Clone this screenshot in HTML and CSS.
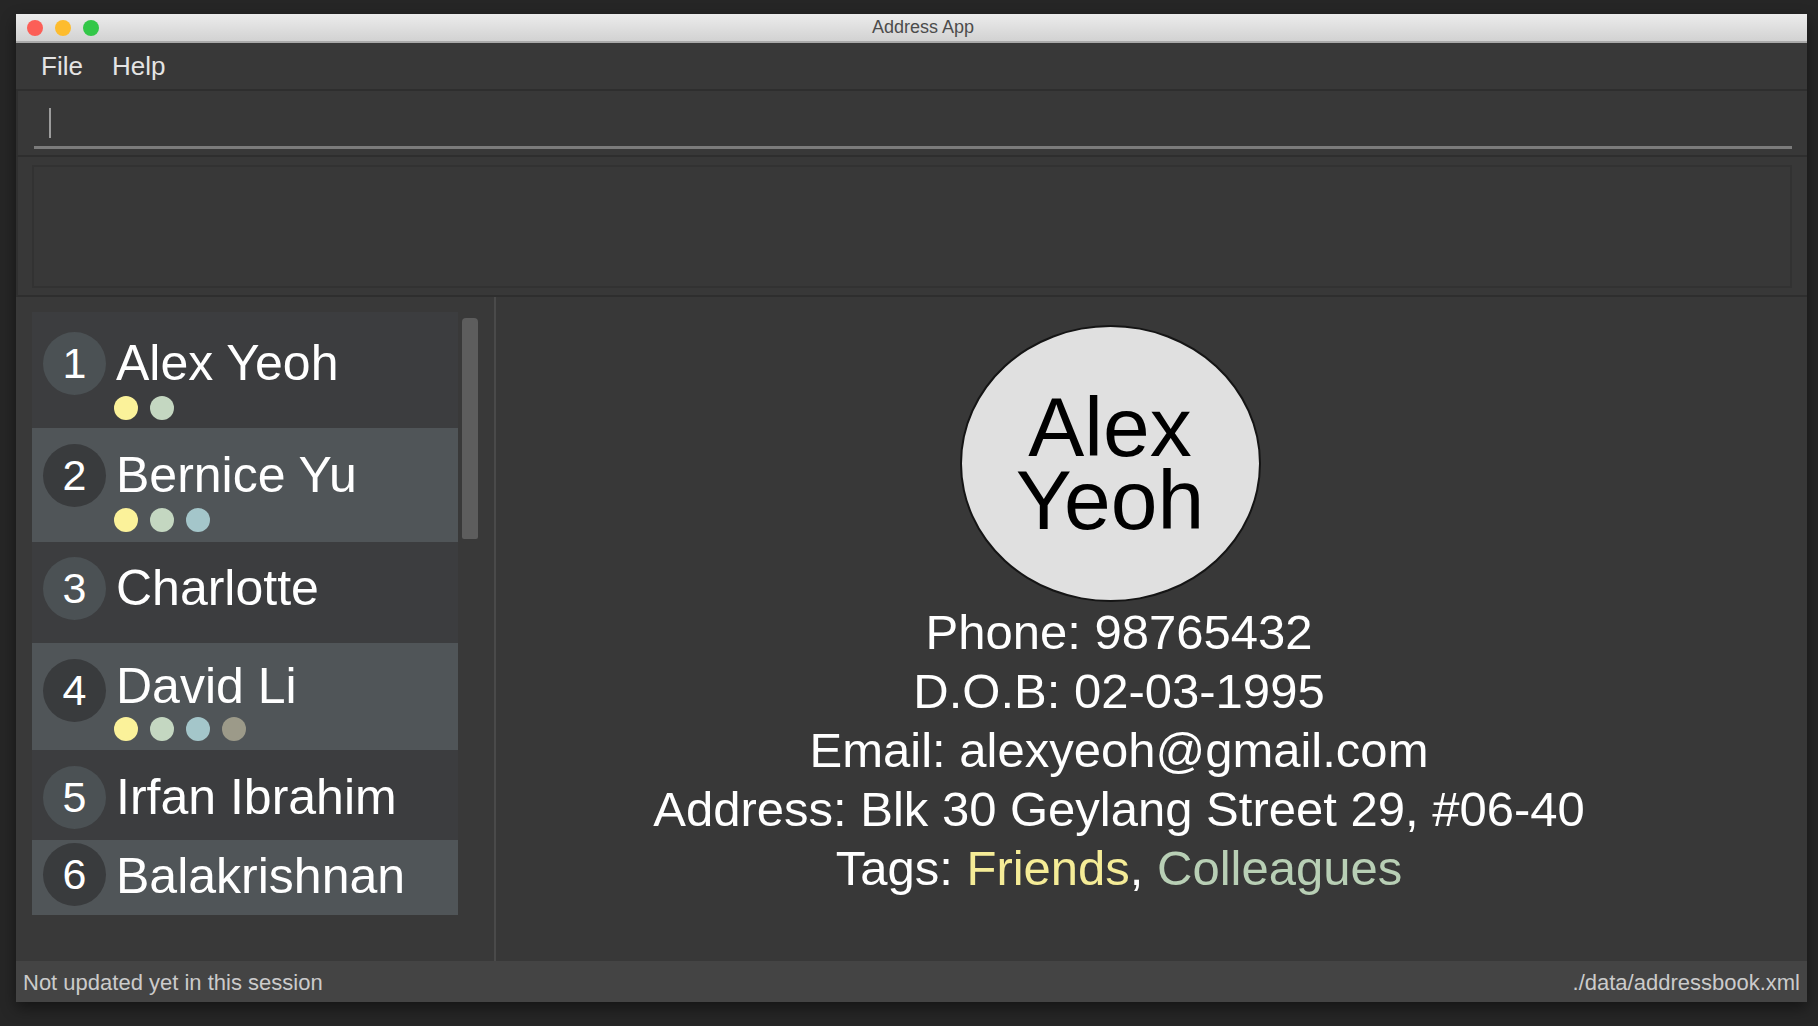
FILE: index.html
```html
<!DOCTYPE html>
<html lang="en">
<head>
<meta charset="utf-8">
<title>Address App</title>
<link rel="stylesheet" href="styles.css">
</head>
<body>
<div class="window">
  <div class="titlebar">
    <div class="lights">
      <span class="light red"></span>
      <span class="light yellow"></span>
      <span class="light green"></span>
    </div>
    <div class="title">Address App</div>
  </div>
  <div class="menubar">
    <span class="menu">File</span>
    <span class="menu">Help</span>
  </div>
  <div class="command">
    <div class="cmd-input"><span class="caret"></span></div>
  </div>
  <div class="result">
    <div class="result-box"></div>
  </div>
  <div class="main">
    <div class="sidebar">
      <div class="list">
        <div class="card">
          <div class="index">1</div>
          <div class="name">Alex Yeoh</div>
          <div class="tags"><span class="dot c-yellow"></span><span class="dot c-green"></span></div>
        </div>
        <div class="card">
          <div class="index">2</div>
          <div class="name">Bernice Yu</div>
          <div class="tags"><span class="dot c-yellow"></span><span class="dot c-green"></span><span class="dot c-blue"></span></div>
        </div>
        <div class="card">
          <div class="index">3</div>
          <div class="name">Charlotte</div>
        </div>
        <div class="card">
          <div class="index">4</div>
          <div class="name">David Li</div>
          <div class="tags"><span class="dot c-yellow"></span><span class="dot c-green"></span><span class="dot c-blue"></span><span class="dot c-grey"></span></div>
        </div>
        <div class="card">
          <div class="index">5</div>
          <div class="name">Irfan Ibrahim</div>
        </div>
        <div class="card">
          <div class="index">6</div>
          <div class="name">Balakrishnan</div>
        </div>
      </div>
      <div class="scrollbar"><div class="thumb"></div></div>
    </div>
    <div class="detail">
      <div class="avatar"><span class="avatar-text">Alex<br>Yeoh</span></div>
      <div class="info">
        <div class="line">Phone: 98765432</div>
        <div class="line">D.O.B: 02-03-1995</div>
        <div class="line">Email: alexyeoh@gmail.com</div>
        <div class="line">Address: Blk 30 Geylang Street 29, #06-40</div>
        <div class="line">Tags: <span class="tag-friends">Friends</span>, <span class="tag-colleagues">Colleagues</span></div>
      </div>
    </div>
  </div>
  <div class="status">
    <span>Not updated yet in this session</span>
    <span>./data/addressbook.xml</span>
  </div>
</div>
</body>
</html>
```
FILE: styles.css
```css
* { box-sizing: border-box; }

html, body {
  margin: 0;
  padding: 0;
  background: #262626;
  font-family: "Liberation Sans", Arial, Helvetica, sans-serif;
}

body {
  width: 1818px;
  height: 1026px;
  overflow: hidden;
}

.window {
  margin: 14px 0 0 16px;
  width: 1791px;
  height: 988px;
  display: flex;
  flex-direction: column;
  background: #383838;
  box-shadow: 0 6px 14px rgba(0, 0, 0, 0.45);
}

/* ---------- title bar ---------- */
.titlebar {
  height: 29px;
  flex: none;
  display: flex;
  align-items: center;
  background: linear-gradient(#ececec, #d2d2d2);
  border-bottom: 2px solid #a9a9a9;
  padding-left: 11px;
}

.lights {
  display: flex;
  gap: 12px;
  flex: none;
}

.light {
  width: 16px;
  height: 16px;
  border-radius: 50%;
  display: block;
}
.light.red { background: #fc5f57; }
.light.yellow { background: #fdbc2e; }
.light.green { background: #33c748; }

.title {
  flex: 1;
  text-align: center;
  padding-right: 60px;
  font-size: 18px;
  color: #4c4c4c;
  line-height: 27px;
}

/* ---------- menu bar ---------- */
.menubar {
  height: 48px;
  flex: none;
  display: flex;
  align-items: center;
  gap: 29px;
  padding-left: 25px;
  border-bottom: 2px solid #2e2e2e;
}

.menu {
  font-size: 26px;
  color: #e4e4e4;
  line-height: 46px;
}

/* ---------- command box ---------- */
.command {
  height: 66px;
  flex: none;
  padding: 9px 15px 0 16px;
  border-bottom: 2px solid #2e2e2e;
  border-left: 2px solid #303030;
}

.cmd-input {
  height: 49px;
  border-bottom: 3px solid #7b7b7b;
  padding: 8px 0 0 15px;
}

.caret {
  display: block;
  width: 2px;
  height: 30px;
  background: #9c9c9c;
}

/* ---------- result display ---------- */
.result {
  height: 140px;
  flex: none;
  padding: 8px 15px 7px 14px;
  border-bottom: 2px solid #2e2e2e;
  border-left: 2px solid #303030;
}

.result-box {
  height: 123px;
  background: #383838;
  border: 2px solid #323232;
}

/* ---------- main split ---------- */
.main {
  flex: 1;
  display: flex;
  min-height: 0;
}

.sidebar {
  width: 480px;
  flex: none;
  display: flex;
  align-items: flex-start;
  padding: 15px 0 0 16px;
  background: #393939;
  border-right: 2px solid #4a4a4a;
}

.list {
  width: 426px;
  flex: none;
  display: flex;
  flex-direction: column;
}

.card {
  display: grid;
  grid-template-columns: 63px 1fr;
  column-gap: 8px;
  align-items: start;
  padding-left: 11px;
  background: #3c3d3f;
}

.card:nth-child(even) {
  background: #505558;
}

.card:nth-child(1) { padding-top: 20px; padding-bottom: 8px; }
.card:nth-child(2) { padding-top: 16px; padding-bottom: 10px; }
.card:nth-child(3) { padding-top: 15px; padding-bottom: 23px; }
.card:nth-child(4) { padding-top: 16px; padding-bottom: 9px; }
.card:nth-child(5) { padding-top: 16px; padding-bottom: 11px; }
.card:nth-child(6) { padding-top: 3px; padding-bottom: 7px; }

.index {
  width: 63px;
  height: 63px;
  border-radius: 50%;
  background: #4b5154;
  color: #ffffff;
  font-size: 43px;
  line-height: 63px;
  text-align: center;
}

.card:nth-child(even) .index {
  background: #393b3d;
}

.name {
  font-size: 50px;
  line-height: 63px;
  height: 63px;
  padding-left: 2px;
  color: #ffffff;
  white-space: nowrap;
}

.card:nth-child(4) .name { margin-top: -4px; }
.card:nth-child(6) .name { margin-top: 2px; }

.tags {
  grid-column: 2;
  display: flex;
  gap: 12px;
  margin-top: 1px;
}

.card:nth-child(4) .tags { margin-top: -5px; }

.dot {
  width: 24px;
  height: 24px;
  border-radius: 50%;
  display: block;
}
.c-yellow { background: #fbf29a; }
.c-green { background: #c4d7c1; }
.c-blue { background: #a4c6ca; }
.c-grey { background: #9c9a89; }

.scrollbar {
  margin: 6px 0 0 4px;
  width: 16px;
  flex: none;
}

.thumb {
  height: 221px;
  border-radius: 4px 4px 2px 2px;
  background: #5d5d5d;
}

/* ---------- detail panel ---------- */
.detail {
  flex: 1;
  display: flex;
  flex-direction: column;
  align-items: center;
  padding: 28px 65px 0 0;
  background: #383838;
}

.avatar {
  width: 301px;
  height: 277px;
  flex: none;
  border-radius: 50%;
  background: #e0e0e0;
  border: 2px solid #151515;
  display: flex;
  align-items: center;
  justify-content: center;
  margin-right: 18px;
}

.avatar-text {
  font-size: 84px;
  line-height: 73px;
  color: #000000;
  text-align: center;
}

.info {
  display: flex;
  flex-direction: column;
  align-items: center;
  margin-top: 1px;
}

.line {
  font-size: 49px;
  line-height: 59px;
  color: #ffffff;
  white-space: nowrap;
}

.tag-friends { color: #f5ec97; }
.tag-colleagues { color: #b8cfb5; }

/* ---------- status bar ---------- */
.status {
  height: 41px;
  flex: none;
  display: flex;
  justify-content: space-between;
  align-items: flex-start;
  padding: 2px 7px 0 7px;
  background: #444444;
  font-size: 22px;
  line-height: 39px;
  color: #cbcbcb;
}
```
